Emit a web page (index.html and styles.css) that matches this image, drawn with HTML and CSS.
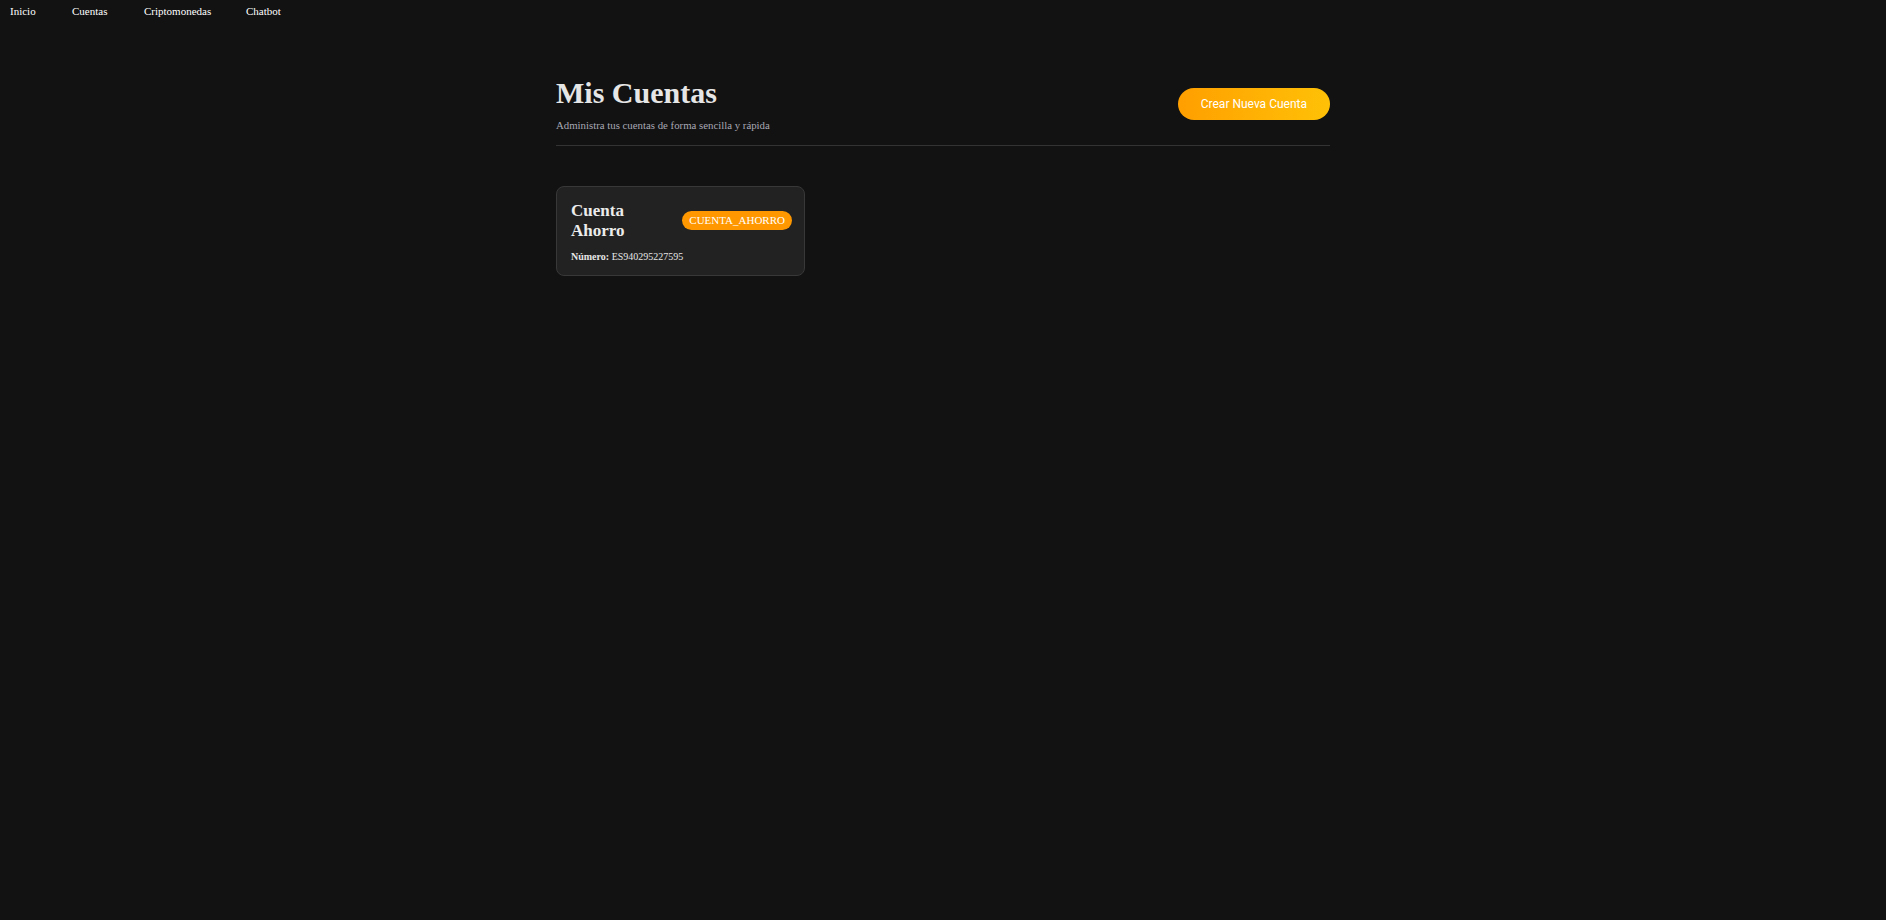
FILE: index.html
```html
<!DOCTYPE html>
<html lang="es">
<head>
<meta charset="utf-8">
<title>Mis Cuentas</title>
<link rel="stylesheet" href="styles.css">
</head>
<body>
<nav class="nav">
  <a class="nav-link" href="#">Inicio</a>
  <a class="nav-link" href="#">Cuentas</a>
  <a class="nav-link" href="#">Criptomonedas</a>
  <a class="nav-link" href="#">Chatbot</a>
</nav>
<main class="container">
  <header class="page-header">
    <div class="titles">
      <h1 class="title">Mis Cuentas</h1>
      <p class="subtitle">Administra tus cuentas de forma sencilla y rápida</p>
    </div>
    <button class="btn-create">Crear Nueva Cuenta</button>
  </header>
  <section class="grid">
    <article class="card">
      <div class="card-top">
        <h2 class="card-title">Cuenta Ahorro</h2>
        <span class="badge">CUENTA_AHORRO</span>
      </div>
      <p class="card-number"><strong>Número:</strong> ES940295227595</p>
    </article>
  </section>
</main>
</body>
</html>
```
FILE: styles.css
```css
* { box-sizing: border-box; }
html, body {
  margin: 0;
  background: #121212;
  color: #e0e0e0;
  font-family: "Liberation Serif", "Times New Roman", serif;
}
.nav {
  display: flex;
  height: 22px;
  align-items: center;
  padding: 0 10px;
}
.nav-link {
  color: #ffffff;
  text-decoration: none;
  font-size: 11px;
}
.nav-link:nth-child(1) { width: 62px; }
.nav-link:nth-child(2) { width: 72px; }
.nav-link:nth-child(3) { width: 102px; }
.container {
  width: 774px;
  margin: 54px auto 0;
}
.page-header {
  display: flex;
  justify-content: space-between;
  align-items: center;
  border-bottom: 1px solid #333;
  padding-bottom: 14px;
}
.title {
  margin: 0;
  font-size: 30px;
  font-weight: bold;
  color: #e6e6e6;
  line-height: 34px;
}
.subtitle {
  margin: 9px 0 0;
  font-size: 10.8px;
  color: #a8a8b4;
}
.btn-create {
  border: none;
  border-radius: 999px;
  height: 32px;
  padding: 0 23px;
  background: linear-gradient(90deg, #ff9f00, #ffc107);
  color: #fff;
  font-family: Roboto, "Liberation Sans", sans-serif;
  font-size: 12px;
  cursor: pointer;
}
.grid {
  display: grid;
  grid-template-columns: repeat(3, 249px);
  gap: 14px;
  margin-top: 40px;
}
.card {
  background: #222;
  border: 1px solid #383838;
  border-radius: 8px;
  padding: 14px 12px 12px 14px;
}
.card-top {
  display: flex;
  justify-content: space-between;
  align-items: center;
  gap: 10px;
}
.card-title {
  margin: 0;
  font-size: 17px;
  line-height: 19.5px;
  font-weight: bold;
  color: #ececec;
}
.badge {
  background: #ff9800;
  color: #fff;
  font-size: 11px;
  line-height: 13px;
  border-radius: 10px;
  padding: 3px 7px;
  white-space: nowrap;
}
.card-number {
  margin: 11px 0 0;
  font-size: 10px;
  line-height: 12px;
  color: #e6e6e6;
}
```
